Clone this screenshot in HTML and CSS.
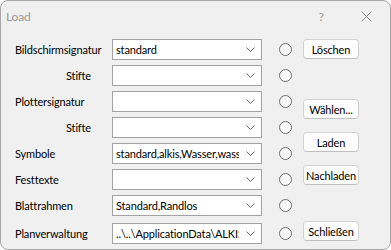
FILE: index.html
```html
<!DOCTYPE html>
<html lang="de">
<head>
    <meta charset="UTF-8">
    <title>Load</title>
    <link rel="stylesheet" href="styles.css">
</head>
<body>
    <div class="window">
        <div class="titlebar">
            <span class="title">Load</span>
            <span class="help">?</span>
            <span class="close">
                <svg width="11" height="11" viewBox="0 0 11 11"><path d="M0.5 0.5 L10.5 10.5 M10.5 0.5 L0.5 10.5" stroke="#8a8a8a" stroke-width="1" fill="none"/></svg>
            </span>
        </div>
        <div class="content">
            <div class="fields">
                <label>Bildschirmsignatur</label>
                <div class="combo"><span>standard</span><svg class="arrow" width="9" height="5" viewBox="0 0 9 5"><path d="M0.5 0.5 L4.5 4.5 L8.5 0.5" stroke="#6f6f6f" fill="none"/></svg></div>
                <span class="radio"></span>

                <label class="sub">Stifte</label>
                <div class="combo"><span></span><svg class="arrow" width="9" height="5" viewBox="0 0 9 5"><path d="M0.5 0.5 L4.5 4.5 L8.5 0.5" stroke="#6f6f6f" fill="none"/></svg></div>
                <span class="radio"></span>

                <label>Plottersignatur</label>
                <div class="combo"><span></span><svg class="arrow" width="9" height="5" viewBox="0 0 9 5"><path d="M0.5 0.5 L4.5 4.5 L8.5 0.5" stroke="#6f6f6f" fill="none"/></svg></div>
                <span class="radio"></span>

                <label class="sub">Stifte</label>
                <div class="combo"><span></span><svg class="arrow" width="9" height="5" viewBox="0 0 9 5"><path d="M0.5 0.5 L4.5 4.5 L8.5 0.5" stroke="#6f6f6f" fill="none"/></svg></div>
                <span class="radio"></span>

                <label>Symbole</label>
                <div class="combo"><span>standard,alkis,Wasser,wasserschutz</span><svg class="arrow" width="9" height="5" viewBox="0 0 9 5"><path d="M0.5 0.5 L4.5 4.5 L8.5 0.5" stroke="#6f6f6f" fill="none"/></svg></div>
                <span class="radio"></span>

                <label>Festtexte</label>
                <div class="combo"><span></span><svg class="arrow" width="9" height="5" viewBox="0 0 9 5"><path d="M0.5 0.5 L4.5 4.5 L8.5 0.5" stroke="#6f6f6f" fill="none"/></svg></div>
                <span class="radio"></span>

                <label>Blattrahmen</label>
                <div class="combo"><span>Standard,Randlos</span><svg class="arrow" width="9" height="5" viewBox="0 0 9 5"><path d="M0.5 0.5 L4.5 4.5 L8.5 0.5" stroke="#6f6f6f" fill="none"/></svg></div>
                <span class="radio"></span>

                <label class="last">Planverwaltung</label>
                <div class="combo last"><span>..\..\ApplicationData\ALKIS</span><svg class="arrow" width="9" height="5" viewBox="0 0 9 5"><path d="M0.5 0.5 L4.5 4.5 L8.5 0.5" stroke="#6f6f6f" fill="none"/></svg></div>
                <span class="radio last"></span>
            </div>
            <div class="buttons">
                <button class="btn-loeschen">Löschen</button>
                <button class="btn-waehlen">Wählen...</button>
                <button class="btn-laden">Laden</button>
                <button class="btn-nachladen">Nachladen</button>
                <button class="btn-schliessen">Schließen</button>
            </div>
        </div>
    </div>
</body>
</html>
```

FILE: styles.css
```css
body{
    margin: 0;
    background-color: #ffffff;
    font-family: Lato, "Liberation Sans", sans-serif;
    font-size: 11px;
    letter-spacing: -0.15px;
    color: #000;
}

.window{
    width: 391px;
    height: 250px;
    box-sizing: border-box;
    border: 1px solid #a8a8a8;
    border-radius: 8px;
    background-color: #f0f0f0;
    overflow: hidden;
}

.titlebar{
    height: 30px;
    display: flex;
    align-items: center;
    padding-left: 5px;
    color: #9a9a9a;
    font-size: 12px;
}

.title{
    flex: 1;
}

.help{
    width: 12px;
    text-align: center;
    margin-right: 34px;
}

.close{
    display: flex;
    margin-right: 18px;
}

.content{
    display: flex;
    padding-top: 8px;
    padding-left: 14px;
}

.fields{
    display: grid;
    grid-template-columns: 97px 150px 13px;
    grid-auto-rows: 21px;
    row-gap: 5px;
    align-items: center;
}

.fields label{
    white-space: nowrap;
}

.fields label.sub{
    text-align: right;
    padding-right: 21px;
}

.fields .last{
    margin-top: 2px;
    margin-bottom: -2px;
}

.combo{
    height: 21px;
    box-sizing: border-box;
    border: 1px solid #a2a2a2;
    background-color: #fff;
    display: flex;
    align-items: center;
    padding-left: 3px;
    padding-right: 6px;
}

.combo span{
    flex: 1;
    overflow: hidden;
    white-space: nowrap;
}

.arrow{
    margin-left: 7px;
    flex-shrink: 0;
}

.radio{
    width: 13px;
    height: 13px;
    margin-left: 17px;
    box-sizing: border-box;
    border: 1px solid #6e6e6e;
    border-radius: 50%;
    background-color: #f8f8f8;
}

.buttons{
    display: flex;
    flex-direction: column;
    margin-left: 28px;
}

.buttons button{
    width: 56px;
    height: 20px;
    padding: 0;
    font-family: Lato, "Liberation Sans", sans-serif;
    font-size: 11px;
    letter-spacing: -0.15px;
    color: #000;
    background-color: #fdfdfd;
    border: 1px solid #d2d2d2;
    border-bottom-color: #c0c0c0;
    border-radius: 4px;
}

.btn-waehlen{
    margin-top: 40px;
}

.btn-laden{
    margin-top: 13px;
}

.btn-nachladen{
    margin-top: 13px;
}

.btn-schliessen{
    margin-top: 36px;
}
```
